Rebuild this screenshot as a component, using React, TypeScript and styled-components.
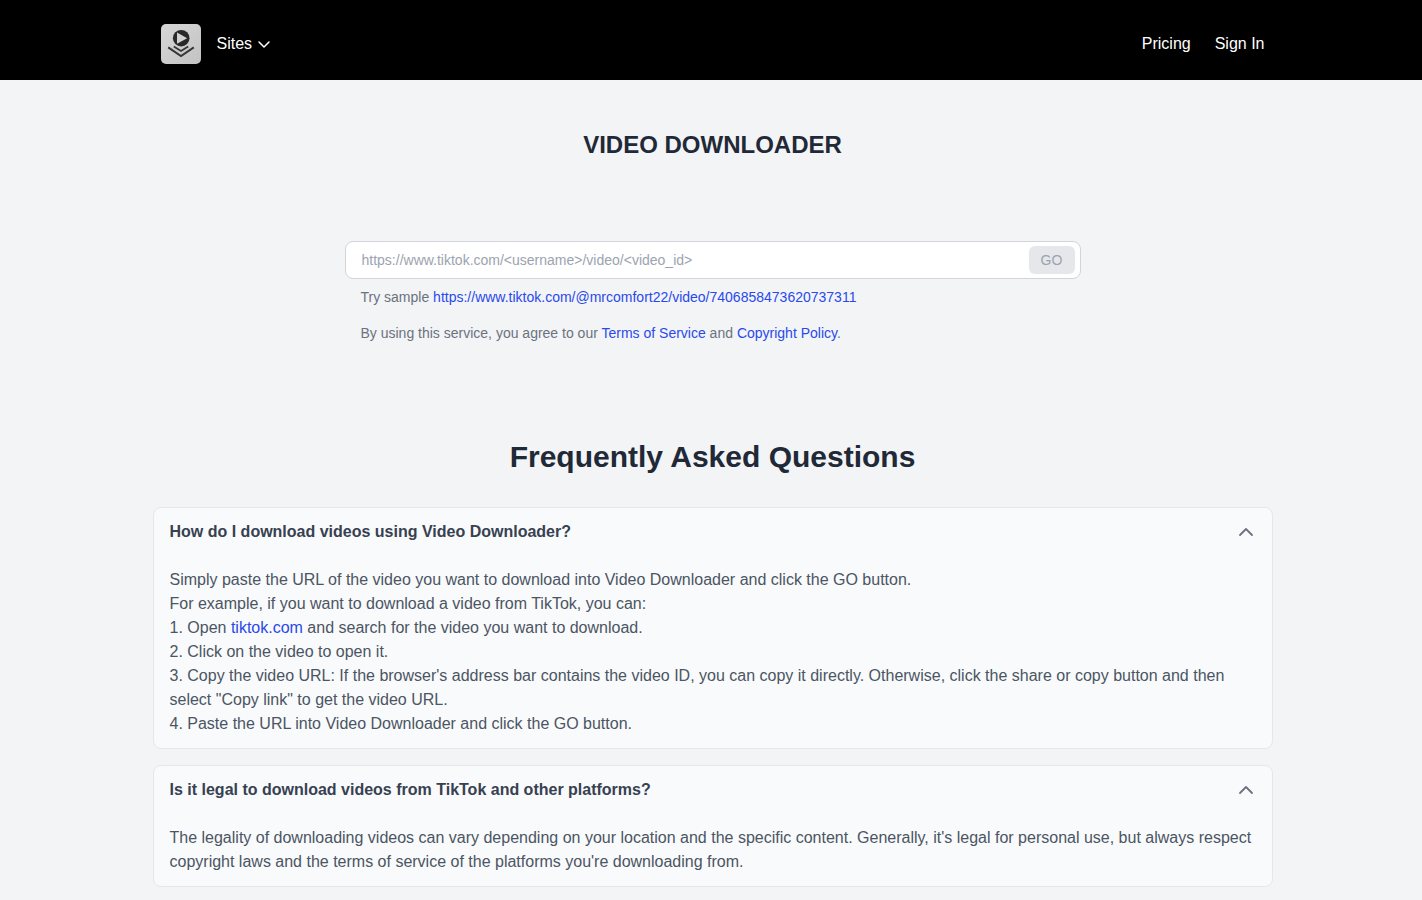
import React, { useState } from "react";
import styled, { createGlobalStyle } from "styled-components";

const GlobalStyle = createGlobalStyle`
  *, *::before, *::after { box-sizing: border-box; }
  body {
    margin: 0;
    background: #f3f4f6;
    color: #4b5563;
    font-family: "Liberation Sans", Arial, sans-serif;
    font-size: 16px;
    line-height: 24px;
  }
  h1, h2, h3, p { margin: 0; padding: 0; }
  h3 { font-size: 16px; }
  button, input { font: inherit; color: inherit; }
`;

const Header = styled.header`
  background: #000;
  padding: 24px 0 16px 3px;
`;

const Nav = styled.nav`
  display: flex;
  align-items: center;
  gap: 16px;
  max-width: 1120px;
  margin: 0 auto;
  padding: 0 8px;
  color: #fff;
`;

const LogoLink = styled.a`
  display: block;
  width: 40px;
  height: 40px;
  svg { display: block; }
`;

const MenuButton = styled.button`
  display: flex;
  align-items: center;
  gap: 4px;
  padding: 0;
  border: 0;
  background: none;
  cursor: pointer;
`;

const NavLinks = styled.div`
  display: flex;
  gap: 24px;
  margin-left: auto;
`;

const NavLink = styled.a`
  color: #fff;
  text-decoration: none;
`;

const Main = styled.main`
  padding: 49px 0 0 3px;
`;

const Title = styled.h1`
  color: #1f2937;
  font-size: 24px;
  line-height: 32px;
  font-weight: 700;
  text-align: center;
`;

const DownloadForm = styled.form`
  max-width: 736px;
  margin: 80px auto 0;
  font-size: 14px;
  line-height: 20px;
`;

const UrlField = styled.div`
  display: flex;
  align-items: center;
  height: 38px;
  padding: 0 5px 0 0;
  border: 1px solid #d1d5db;
  border-radius: 8px;
  background: #fff;
`;

const UrlInput = styled.input`
  flex: 1;
  min-width: 0;
  padding: 8px 16px;
  border: 0;
  outline: 0;
  background: none;
  &::placeholder { color: #9ca3af; opacity: 1; }
`;

const GoButton = styled.button`
  width: 46px;
  height: 28px;
  padding: 0;
  border: 0;
  border-radius: 6px;
  background: #e5e7eb;
  color: #9ca3af;
`;

const Hint = styled.p<{ $gap: number }>`
  margin-top: ${(p) => p.$gap}px;
  padding: 0 16px;
  color: #6b7280;
`;

const TextLink = styled.a`
  color: #2a49ec;
  text-decoration: none;
`;

const Faq = styled.section`
  max-width: 1120px;
  margin: 96px auto 0;
`;

const FaqTitle = styled.h2`
  margin-bottom: 32px;
  color: #1f2937;
  font-size: 30px;
  line-height: 36px;
  font-weight: 700;
  text-align: center;
`;

const CardList = styled.div`
  display: flex;
  flex-direction: column;
  gap: 16px;
`;

const Card = styled.article`
  border: 1px solid #e5e7eb;
  border-radius: 8px;
  background: #f9fafb;
`;

const Question = styled.button`
  display: flex;
  align-items: center;
  justify-content: space-between;
  width: 100%;
  padding: 12px 16px;
  border: 0;
  background: none;
  color: #374151;
  font-weight: 700;
  text-align: left;
  cursor: pointer;
`;

const Answer = styled.div`
  padding: 12px 16px;
`;

const Chevron = styled.svg<{ $up?: boolean }>`
  display: block;
  width: 20px;
  height: 20px;
  fill: none;
  stroke: ${(p) => (p.$up ? "#6b7280" : "#fff")};
  stroke-width: ${(p) => (p.$up ? 1.8 : 1.5)};
  stroke-linecap: round;
  stroke-linejoin: round;
`;

function Logo() {
  return (
    <svg width="40" height="40" viewBox="0 0 40 40" role="img" aria-label="Video Downloader">
      <defs>
        <linearGradient id="tile" x1="0" y1="0" x2="1" y2="1">
          <stop offset="0" stopColor="#d6d6d6" />
          <stop offset="0.5" stopColor="#cdcdcd" />
          <stop offset="1" stopColor="#c2c2c2" />
        </linearGradient>
      </defs>
      <rect width="40" height="40" rx="5" fill="url(#tile)" />
      <circle cx="20.2" cy="14.2" r="8.3" fill="#292929" />
      <path d="M16 8.4 26.2 14.2 16 19.8Z" fill="#d2d2d2" />
      <path d="M12.8 22.6 20 27 27.2 22.6" fill="none" stroke="#363636" strokeWidth="1.8" />
      <path d="M7.2 23.4 20 32 32.8 23.4" fill="none" stroke="#363636" strokeWidth="2" />
    </svg>
  );
}

function FaqItem({ question, children }: { question: string; children: React.ReactNode }) {
  const [open, setOpen] = useState(true);
  return (
    <Card>
      <h3>
        <Question type="button" aria-expanded={open} onClick={() => setOpen(!open)}>
          {question}
          <Chevron $up viewBox="0 0 20 20" aria-hidden="true">
            <path d={open ? "M4 13l6-6 6 6" : "M4 7l6 6 6-6"} />
          </Chevron>
        </Question>
      </h3>
      {open && <Answer>{children}</Answer>}
    </Card>
  );
}

export default function App() {
  const [url, setUrl] = useState("");
  const sample = "https://www.tiktok.com/@mrcomfort22/video/7406858473620737311";
  return (
    <>
      <GlobalStyle />
      <Header>
        <Nav>
          <LogoLink href="#"><Logo /></LogoLink>
          <MenuButton type="button">
            Sites
            <Chevron viewBox="0 0 20 20" aria-hidden="true">
              <path d="M3 8l5 5 5-5" />
            </Chevron>
          </MenuButton>
          <NavLinks>
            <NavLink href="#pricing">Pricing</NavLink>
            <NavLink href="#signin">Sign In</NavLink>
          </NavLinks>
        </Nav>
      </Header>
      <Main>
        <Title>VIDEO DOWNLOADER</Title>
        <DownloadForm onSubmit={(e) => e.preventDefault()}>
          <UrlField>
            <UrlInput
              type="text"
              aria-label="Video URL"
              placeholder="https://www.tiktok.com/<username>/video/<video_id>"
              value={url}
              onChange={(e) => setUrl(e.target.value)}
            />
            <GoButton type="submit" disabled={!url}>GO</GoButton>
          </UrlField>
          <Hint $gap={8}>
            Try sample <TextLink href={sample}>{sample}</TextLink>
          </Hint>
          <Hint $gap={16}>
            By using this service, you agree to our <TextLink href="#terms">Terms of Service</TextLink> and{" "}
            <TextLink href="#copyright">Copyright Policy</TextLink>.
          </Hint>
        </DownloadForm>
        <Faq>
          <FaqTitle>Frequently Asked Questions</FaqTitle>
          <CardList>
            <FaqItem question="How do I download videos using Video Downloader?">
              <p>Simply paste the URL of the video you want to download into Video Downloader and click the GO button.</p>
              <p>For example, if you want to download a video from TikTok, you can:</p>
              <p>1. Open <TextLink href="#tiktok">tiktok.com</TextLink> and search for the video you want to download.</p>
              <p>2. Click on the video to open it.</p>
              <p>
                3. Copy the video URL: If the browser's address bar contains the video ID, you can copy it directly.
                Otherwise, click the share or copy button and then select "Copy link" to get the video URL.
              </p>
              <p>4. Paste the URL into Video Downloader and click the GO button.</p>
            </FaqItem>
            <FaqItem question="Is it legal to download videos from TikTok and other platforms?">
              <p>
                The legality of downloading videos can vary depending on your location and the specific content.
                Generally, it's legal for personal use, but always respect copyright laws and the terms of service of
                the platforms you're downloading from.
              </p>
            </FaqItem>
          </CardList>
        </Faq>
      </Main>
    </>
  );
}
